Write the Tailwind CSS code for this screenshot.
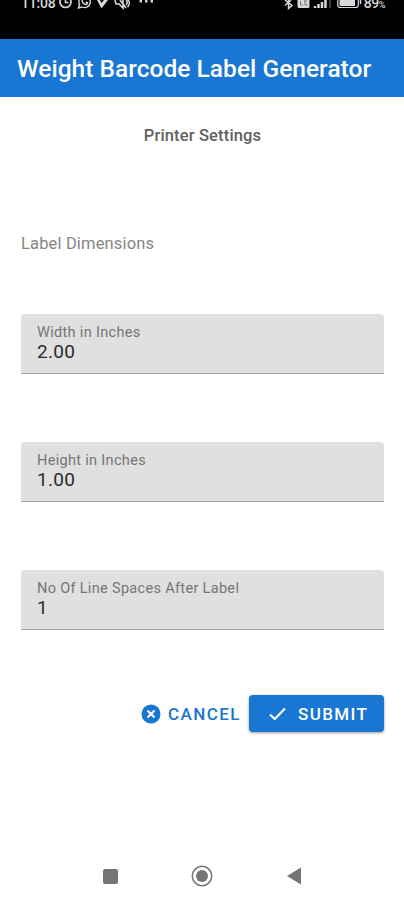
<!DOCTYPE html>
<html lang="en">
<head>
    <meta charset="UTF-8">
    <meta name="viewport" content="width=device-width, initial-scale=1.0">
    <title>Weight Barcode Label Generator</title>
    <script src="https://cdn.jsdelivr.net/npm/@tailwindcss/browser@4"></script>
</head>
<body class="bg-white font-['Roboto',sans-serif]">
    <div class="w-[404px] h-[900px] flex flex-col overflow-hidden">
        <!-- Status Bar -->
        <div class="h-[39px] shrink-0 bg-black text-[#d8d8d8] flex items-start justify-between pl-[21px] pr-[19px] overflow-hidden">
            <div class="flex items-start">
                <span class="w-[34px] text-[14px] leading-4 -mt-[5px] tracking-[-0.2px] font-medium whitespace-nowrap">11:08</span>
                <svg class="w-[96px] h-[10px] ml-[3px]" viewBox="58 0 96 10" fill="none" stroke="currentColor">
                    <!-- Alarm -->
                    <circle cx="65.500" cy="2" r="5.500" stroke-width="1.700" />
                    <path d="M65.500 -1v3.500h3" stroke-width="1.600" />
                    <!-- WhatsApp -->
                    <path d="M78.500 8l1-3.500a5.700 5.700 0 1 1 2.500 2.500z" stroke-width="1.400" />
                    <path d="M82 0c.3 2.500 2 4.300 4.500 4.500l1-1.500-1.700-1" stroke-width="1.500" />
                    <!-- Location -->
                    <path d="M97 0l4.500 8.500L108 0h-4l-2.500 3L100 0z" fill="currentColor" stroke="none" />
                    <!-- Muted -->
                    <path d="M115 0l1 4h3l4 4V0M120 0l6 8M126 0c1.500 1 1.500 3 0 5M128 0c2 2 1.500 5-.5 7" stroke-width="1.600" />
                    <path d="M139.500 1.200h2.500M145 1.200h2.500M150.500 1.200h2.500" stroke-width="2.400" />
                </svg>
            </div>
            <div class="flex items-start">
                <svg class="w-[79px] h-[10px]" viewBox="281 0 79 10" fill="none" stroke="currentColor">
                    <!-- Bluetooth -->
                    <path d="M283 5.500l6-5.500M283 0l7 5.500-3.500 3V-2" stroke-width="1.500" />
                    <!-- VoLTE -->
                    <path d="M295.500 0h12v6.500a1.500 1.500 0 0 1-1.500 1.500h-9a1.500 1.500 0 0 1-1.500-1.500z" fill="currentColor" stroke="none" />
                    <path d="M298.500 1v4h2.500M303 1v4h2.500M302 1h3" stroke="#777" stroke-width="1" />
                    <!-- Signal -->
                    <path d="M313 8V6M316.500 8V4M320 8V2M323.500 8V0" stroke-width="2.500" />
                    <path d="M328 8V0" stroke="#666" stroke-width="1.200" />
                    <!-- Battery -->
                    <path d="M335.800 0v5a2.500 2.500 0 0 0 2.500 2.500h15.500a2.500 2.500 0 0 0 2.500-2.500V0" stroke-width="1.200" />
                    <path d="M337.500 0h15.500v6h-14.500a1 1 0 0 1-1-1z" fill="currentColor" stroke="none" />
                    <path d="M358.500 0v4" stroke-width="1.500" />
                </svg>
                <span class="ml-[2px] text-[14px] leading-4 -mt-[5px] tracking-[-0.4px] font-medium whitespace-nowrap">89<span class="text-[9px]">%</span></span>
            </div>
        </div>

        <!-- App Bar -->
        <header class="h-[58px] shrink-0 bg-[#1976d2] flex items-center px-[17px] pt-[3px]">
            <h1 class="text-white text-[24.5px] font-medium tracking-[0.03px] whitespace-nowrap">Weight Barcode Label Generator</h1>
        </header>

        <main class="flex-1 pl-[21px] pr-5 text-[#757575]">
            <h2 class="mt-[29px] h-5 leading-5 text-center text-[16.5px] font-medium tracking-[0.15px] text-[#616161]">Printer Settings</h2>
            <p class="mt-[88px] h-5 leading-5 text-[16.5px] tracking-[0.15px] text-[#858585]">Label Dimensions</p>

            <form class="mt-[60px]">
                <div class="flex flex-col gap-[68px]">
                    <div class="h-[60px] bg-[#e0e0e0] rounded-t-[4px] border-b border-[#a0a0a0] px-4 pt-[11px]">
                        <label class="block text-[14.5px] leading-4 tracking-[0.32px]">Width in Inches</label>
                        <div class="mt-px text-[19px] leading-5 tracking-[0.3px] text-[#2b2b2b]">2.00</div>
                    </div>
                    <div class="h-[60px] bg-[#e0e0e0] rounded-t-[4px] border-b border-[#a0a0a0] px-4 pt-[11px]">
                        <label class="block text-[14.5px] leading-4 tracking-[0.32px]">Height in Inches</label>
                        <div class="mt-px text-[19px] leading-5 tracking-[0.3px] text-[#2b2b2b]">1.00</div>
                    </div>
                    <div class="h-[60px] bg-[#e0e0e0] rounded-t-[4px] border-b border-[#a0a0a0] px-4 pt-[11px]">
                        <label class="block text-[14.5px] leading-4 tracking-[0.32px]">No Of Line Spaces After Label</label>
                        <div class="mt-px text-[19px] leading-5 tracking-[0.3px] text-[#2b2b2b]">1</div>
                    </div>
                </div>

                <!-- Actions -->
                <div class="mt-[65px] flex justify-end">
                    <button type="button" class="h-[37px] w-[108px] flex items-center text-[#1976d2] text-[17px] font-medium tracking-[1.4px] whitespace-nowrap">
                        <svg class="w-5 h-5 mr-[7px] shrink-0" viewBox="0 0 20 20">
                            <circle cx="10" cy="10" r="9.500" fill="#1976d2" />
                            <path d="M6.500 6.500l7 7M13.500 6.500l-7 7" stroke="#fff" stroke-width="2.200" />
                        </svg>
                        <span class="pt-[2px]">CANCEL</span>
                    </button>
                    <button type="button" class="h-[37px] w-[135px] pl-[20px] flex items-center rounded-[4px] bg-[#1976d2] text-white text-[17px] font-medium tracking-[1.4px] shadow-[0_1px_3px_rgba(0,0,0,0.4)] whitespace-nowrap">
                        <svg class="w-[18px] h-5 mr-[11px] shrink-0" viewBox="0 0 18 20" fill="none" stroke="#fff" stroke-width="2">
                            <path d="M1 10.500l4.700 4.500L16 4.500" />
                        </svg>
                        <span class="pt-[2px]">SUBMIT</span>
                    </button>
                </div>
            </form>
        </main>

        <!-- Navigation Bar -->
        <nav class="h-12 shrink-0 flex items-center pl-[103px]">
            <div class="w-[15px] h-[15px] rounded-[2px] bg-[#757575]"></div>
            <svg class="w-[22px] h-[22px] ml-[73px]" viewBox="0 0 22 22">
                <circle cx="11" cy="11" r="9.700" fill="none" stroke="#757575" stroke-width="1.500" />
                <circle cx="11" cy="11" r="6" fill="#757575" />
            </svg>
            <svg class="w-[15px] h-[18px] ml-[74px]" viewBox="0 0 15 18">
                <path d="M0 9L14 .5v17z" fill="#757575" />
            </svg>
        </nav>
    </div>
</body>
</html>
